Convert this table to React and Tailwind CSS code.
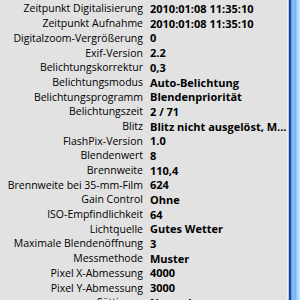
const rows = [
  ["Zeitpunkt Digitalisierung", "2010:01:08 11:35:10"],
  ["Zeitpunkt Aufnahme", "2010:01:08 11:35:10"],
  ["Digitalzoom-Vergrößerung", "0"],
  ["Exif-Version", "2.2"],
  ["Belichtungskorrektur", "0,3"],
  ["Belichtungsmodus", "Auto-Belichtung"],
  ["Belichtungsprogramm", "Blendenpriorität"],
  ["Belichtungszeit", "2 / 71"],
  ["Blitz", "Blitz nicht ausgelöst, M..."],
  ["FlashPix-Version", "1.0"],
  ["Blendenwert", "8"],
  ["Brennweite", "110,4"],
  ["Brennweite bei 35-mm-Film", "624"],
  ["Gain Control", "Ohne"],
  ["ISO-Empfindlichkeit", "64"],
  ["Lichtquelle", "Gutes Wetter"],
  ["Maximale Blendenöffnung", "3"],
  ["Messmethode", "Muster"],
  ["Pixel X-Abmessung", "4000"],
  ["Pixel Y-Abmessung", "3000"],
  ["Sättigung", "Normal"],
];

export default function App() {
  return (
    <div className="w-[300px] h-[300px] overflow-hidden flex bg-[#e2e2e2]" style={{ fontFamily: '"Open Sans", "DejaVu Sans", sans-serif' }}>
      <div className="flex-1 pt-[2px] text-black">
        {rows.map(([label, value]) => (
          <div key={label} className="flex items-center h-[14.7px] whitespace-nowrap">
            <div className="w-[143px] text-right text-[10.5px]">{label}</div>
            <div className="pl-[7px] font-bold text-[11px]">{value}</div>
          </div>
        ))}
      </div>
      <div className="w-px bg-[#f0f0f0]" />
      <div className="w-px bg-[#c8c8c8]" />
      <div className="w-[2px] bg-[#1b3fa8]" />
      <div className="w-[9px] bg-[linear-gradient(90deg,#5a9be8_0%,#8cc3f5_25%,#6fb0f0_45%,#a7d6fb_70%,#c9e8fd_100%)]" />
    </div>
  );
}
